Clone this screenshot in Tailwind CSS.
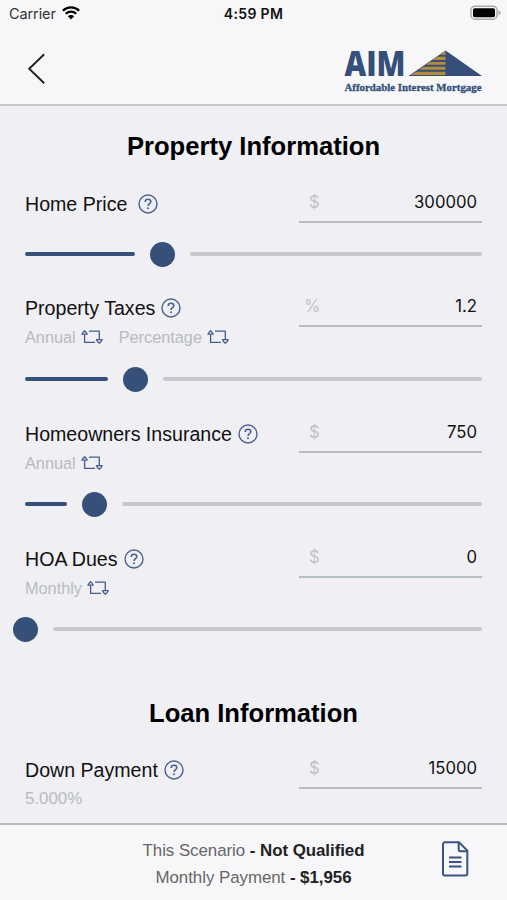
<!DOCTYPE html>
<html lang="en">
<head>
<meta charset="utf-8">
<title>Mortgage Scenario</title>
<script src="https://cdn.jsdelivr.net/npm/@tailwindcss/browser@4"></script>
</head>
<body class="w-[507px] h-[900px] overflow-hidden bg-[#efeff4] flex flex-col font-['Liberation_Sans',sans-serif] text-[#111] leading-none">
<svg class="hidden">
  <symbol id="help" viewBox="0 0 20 20"><circle cx="10" cy="10" r="9" fill="none" stroke="#4c6390" stroke-width="1.4"/><path d="M7.2 7.9C7.2 6.2 8.4 5.300 10 5.300s2.800.9 2.800 2.400c0 2-2.700 2.100-2.700 4.200" fill="none" stroke="#4c6390" stroke-width="1.6"/><circle cx="10" cy="14.300" r="1.050" fill="#4c6390"/></symbol>
  <symbol id="swap" viewBox="0 0 22 16"><g fill="none" stroke="#465d8c" stroke-width="1.300" stroke-linejoin="round"><path d="M3.600 5.200V13.400H14"/><path d="M1 5.200Q1.200 3.900 3.600 1.700Q6 3.900 6.200 5.200Z"/><path d="M8 2.200H18.300V10.600"/><path d="M15.500 10.600H21.200Q20.800 12.200 18.300 14.200Q15.900 12.200 15.500 10.600Z"/></g></symbol>
</svg>
<header class="h-[106px] shrink-0 bg-[#f7f7f9] border-b-2 border-[#c7c7ca] flex flex-col">
  <div class="h-7 flex items-center px-[9px] font-[Inter,sans-serif] relative">
    <span class="text-[14.5px] tracking-[-0.1px] text-[#333]">Carrier</span>
    <svg class="ml-[6px] w-[18px] h-[14px] -mt-[2px]" viewBox="0 0 18 14" fill="none" stroke="#000" stroke-width="2.3"><path d="M.9 4.8a11.5 11.5 0 0 1 16.2 0"/><path d="M3.8 7.8a7.4 7.4 0 0 1 10.4 0"/><path d="M9 13.6L5.9 10.3a4.4 4.4 0 0 1 6.2 0Z" fill="#000" stroke="none"/></svg>
    <span class="absolute left-0 w-[507px] text-center text-[14px] font-semibold tracking-[0.35px] text-[#111]">4:59 PM</span>
    <svg class="absolute left-[470px] top-[5px] w-[32px] h-[16px]" viewBox="0 0 32 16"><rect x="1" y="1.2" width="26" height="13" rx="3.8" fill="#f7f7f9" stroke="#aaa" stroke-width="1.4"/><rect x="3" y="3.2" width="22" height="9" rx="1.6" fill="#000"/><path d="M28.5 5.2q2.2 1 2.2 2.6t-2.2 2.6z" fill="#aaa"/></svg>
  </div>
  <div class="flex justify-between pl-[27px] pr-[24px] pt-5">
    <svg class="w-5 h-8 mt-[5px]" viewBox="0 0 20 32" fill="none" stroke="#222" stroke-width="1.9"><path d="M17.2 1.2L2.2 15.8L17.2 30.2"/></svg>
    <svg class="w-[139px] h-[48px] overflow-visible" viewBox="0 0 139 48">
      <text x="0.500" y="28" font-family="Open Sans" font-weight="800" font-size="36" textLength="61" lengthAdjust="spacingAndGlyphs" fill="#354f7a">AIM</text>
      <path d="M101.500 2.500L138 28H64.500Z" fill="#354f7a"/>
      <g fill="#b48d3b"><path d="M101.500 3V7H96Z"/><path d="M93 8.800H101.500V12H88.500Z"/><path d="M86 14H101.500V16.700H82Z"/><path d="M79.500 18.800H101.500V21.700H75Z"/><path d="M72.500 23.800H101.500V27H66.500Z"/></g>
      <text x="0.500" y="42.500" font-family="Liberation Serif" font-weight="700" font-size="10.500" textLength="137" lengthAdjust="spacingAndGlyphs" fill="#354f7a" stroke="#354f7a" stroke-width=".3">Affordable Interest Mortgage</text>
    </svg>
  </div>
</header>

<main class="flex-1 min-h-0 overflow-hidden px-[25px] flex flex-col">
  <h2 class="h-[74px] shrink-0 pt-[27px] text-center text-[25.6px] leading-[27px] font-bold text-black">Property Information</h2>

  <section class="h-[104px] shrink-0 flex flex-col">
    <div class="flex justify-between h-[44px]">
      <div class="flex h-12 items-center gap-[11px] text-[19.6px]"><span class="pt-[2px]">Home Price</span><svg class="w-5 h-5"><use href="#help"/></svg></div>
      <div class="w-[183px] h-[43px] border-b-2 border-[#b6bec4] flex justify-between items-center pt-[3px] pl-[10px] pr-[5px] font-[Inter,sans-serif] text-[16.7px]"><span class="text-[#c0c4c9]">$</span><span>300000</span></div>
    </div>
    <div class="flex h-[26px] items-center mt-[17px]"><i class="w-[110px] h-1 rounded-full bg-[#365079]"></i><i class="ml-[15px] w-[25px] h-[25px] rounded-full bg-[#365079]"></i><i class="ml-[15px] flex-1 h-1 rounded-full bg-[#c8c8cb]"></i></div>
  </section>

  <section class="h-[126px] shrink-0 flex flex-col">
    <div class="flex justify-between h-[43px]">
      <div class="flex h-12 items-center gap-[6px] text-[19.6px]"><span class="pt-[2px]">Property Taxes</span><svg class="w-5 h-5"><use href="#help"/></svg></div>
      <div class="w-[183px] h-[43px] border-b-2 border-[#b6bec4] flex justify-between items-center pt-[3px] pl-[5px] pr-[5px] font-[Inter,sans-serif] text-[16.7px]"><span class="text-[#c0c4c9]">%</span><span>1.2</span></div>
    </div>
    <div class="h-[20px] flex items-center text-[16.3px] text-[#b7bbc1]">Annual<svg class="ml-[5px] w-[22px] h-4"><use href="#swap"/></svg><span class="ml-4">Percentage</span><svg class="ml-[5px] w-[22px] h-4"><use href="#swap"/></svg></div>
    <div class="flex h-[26px] items-center mt-[19px]"><i class="w-[83px] h-1 rounded-full bg-[#365079]"></i><i class="ml-[15px] w-[25px] h-[25px] rounded-full bg-[#365079]"></i><i class="ml-[15px] flex-1 h-1 rounded-full bg-[#c8c8cb]"></i></div>
  </section>

  <section class="h-[125px] shrink-0 flex flex-col">
    <div class="flex justify-between h-[43px]">
      <div class="flex h-12 items-center gap-[6px] text-[19.6px]"><span class="pt-[2px]">Homeowners Insurance</span><svg class="w-5 h-5"><use href="#help"/></svg></div>
      <div class="w-[183px] h-[43px] border-b-2 border-[#b6bec4] flex justify-between items-center pt-[3px] pl-[10px] pr-[5px] font-[Inter,sans-serif] text-[16.7px]"><span class="text-[#c0c4c9]">$</span><span>750</span></div>
    </div>
    <div class="h-[20px] flex items-center text-[16.3px] text-[#b7bbc1]">Annual<svg class="ml-[5px] w-[22px] h-4"><use href="#swap"/></svg></div>
    <div class="flex h-[26px] items-center mt-[18px]"><i class="w-[42px] h-1 rounded-full bg-[#365079]"></i><i class="ml-[15px] w-[25px] h-[25px] rounded-full bg-[#365079]"></i><i class="ml-[15px] flex-1 h-1 rounded-full bg-[#c8c8cb]"></i></div>
  </section>

  <section class="h-[151px] shrink-0 flex flex-col">
    <div class="flex justify-between h-[43px]">
      <div class="flex h-12 items-center gap-[6px] text-[19.6px]"><span class="pt-[2px]">HOA Dues</span><svg class="w-5 h-5"><use href="#help"/></svg></div>
      <div class="w-[183px] h-[43px] border-b-2 border-[#b6bec4] flex justify-between items-center pt-[3px] pl-[10px] pr-[5px] font-[Inter,sans-serif] text-[16.7px]"><span class="text-[#c0c4c9]">$</span><span>0</span></div>
    </div>
    <div class="h-[20px] flex items-center text-[16.3px] text-[#b7bbc1]">Monthly<svg class="ml-[5px] w-[22px] h-4"><use href="#swap"/></svg></div>
    <div class="flex h-[26px] items-center mt-[18px] -ml-[12px]"><i class="w-[25px] h-[25px] rounded-full bg-[#365079]"></i><i class="ml-[15px] flex-1 h-1 rounded-full bg-[#c8c8cb]"></i></div>
  </section>

  <h2 class="h-[60px] shrink-0 pt-[14px] text-center text-[25.6px] leading-[27px] font-bold text-black">Loan Information</h2>

  <section class="flex flex-col">
    <div class="flex justify-between h-[43px]">
      <div class="flex h-12 items-center gap-[6px] text-[19.6px]"><span class="pt-[2px]">Down Payment</span><svg class="w-5 h-5"><use href="#help"/></svg></div>
      <div class="w-[183px] h-[43px] border-b-2 border-[#b6bec4] flex justify-between items-center pt-[3px] pl-[10px] pr-[5px] font-[Inter,sans-serif] text-[16.7px]"><span class="text-[#c0c4c9]">$</span><span>15000</span></div>
    </div>
    <div class="h-[20px] flex items-center text-[16.9px] text-[#b7bbc1]">5.000%</div>
  </section>
</main>

<footer class="h-[77px] shrink-0 bg-[#f7f7f9] border-t-2 border-[#b9b9bc] relative">
  <div class="pt-[12px] text-center text-[16.9px] leading-[27px] tracking-[-0.05px] text-[#666]">
    <p>This Scenario <b class="text-[#222]">- Not Qualified</b></p>
    <p>Monthly Payment <b class="text-[#222]">- $1,956</b></p>
  </div>
  <svg class="absolute left-[441px] top-[16px] w-[28px] h-[36px]" viewBox="0 0 28 36" fill="none" stroke="#3a5482" stroke-width="2"><path d="M4 1.300H18L26.300 9.600V32.500a2 2 0 0 1-2 2H4a2 2 0 0 1-2-2V3.300a2 2 0 0 1 2-2Z"/><path d="M17.700 1.500V8.200a2 2 0 0 0 2 2H26.200M8 16.500H20.500M8 21H20.500M8 25.500H20.500"/></svg>
</footer>
</body>
</html>
